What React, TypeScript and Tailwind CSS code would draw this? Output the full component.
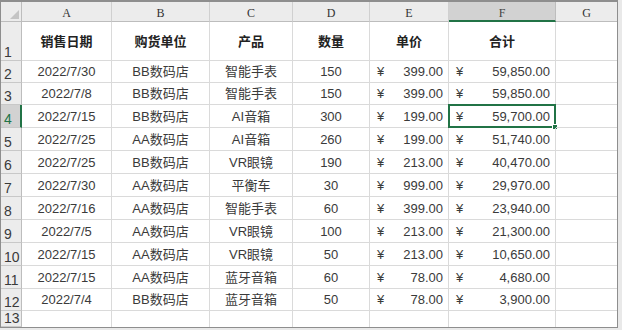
import React from "react"

const cols = ["A", "B", "C", "D", "E", "F", "G"]

const rows = [
  ["2022/7/30", "BB数码店", "智能手表", "150", "399.00", "59,850.00"],
  ["2022/7/8", "BB数码店", "智能手表", "150", "399.00", "59,850.00"],
  ["2022/7/15", "BB数码店", "AI音箱", "300", "199.00", "59,700.00"],
  ["2022/7/25", "AA数码店", "AI音箱", "260", "199.00", "51,740.00"],
  ["2022/7/25", "BB数码店", "VR眼镜", "190", "213.00", "40,470.00"],
  ["2022/7/30", "AA数码店", "平衡车", "30", "999.00", "29,970.00"],
  ["2022/7/16", "AA数码店", "智能手表", "60", "399.00", "23,940.00"],
  ["2022/7/5", "AA数码店", "VR眼镜", "100", "213.00", "21,300.00"],
  ["2022/7/15", "AA数码店", "VR眼镜", "50", "213.00", "10,650.00"],
  ["2022/7/15", "AA数码店", "蓝牙音箱", "60", "78.00", "4,680.00"],
  ["2022/7/4", "BB数码店", "蓝牙音箱", "50", "78.00", "3,900.00"],
]

const headers = ["销售日期", "购货单位", "产品", "数量", "单价", "合计"]

const font = "font-['Liberation_Sans','Noto_Sans_CJK_SC',sans-serif]"

function RowHead({ n, selected }: { n: number; selected?: boolean }) {
  return (
    <div
      className={`flex items-end pl-[3px] pb-[1px] text-[14px] leading-none border-b border-[#c8c8c8] ${
        selected
          ? "bg-[#d2d2d2] border-r-2 border-r-[#217346] text-[#217346]"
          : "bg-[#ececec] border-r border-r-[#bdbdbd] text-[#3a3a3a]"
      }`}
    >
      {n}
    </div>
  )
}

function Cell({ children, last, bottom }: { children?: React.ReactNode; last?: boolean; bottom?: boolean }) {
  return (
    <div
      className={`relative flex items-end justify-center pb-[2px] text-[13px] leading-[17px] text-[#3a3a3a] border-[#dadada] ${
        last ? "" : "border-r"
      } ${bottom ? "" : "border-b"}`}
    >
      {children}
    </div>
  )
}

function Money({ value }: { value: string }) {
  return (
    <div className="flex w-full items-end justify-between pl-[7px] pr-[5px]">
      <span>¥</span>
      <span>{value}</span>
    </div>
  )
}

export default function App() {
  return (
    <div className={`w-[622px] h-[330px] bg-[#e9e9e9] pr-[4px] pb-[2px] ${font}`}>
      <div className="border-t-2 border-l border-r border-b border-[#8e8e8e] bg-white">
        <div className="grid grid-cols-[21px_90px_98px_83px_77px_79px_107px_61px] grid-rows-[20px_39px_22px_22px_23px_23px_23px_23px_23px_23px_23px_23px_22px_16px]">
          {/* corner */}
          <div className="relative bg-[#ececec] border-r border-b border-[#bdbdbd]">
            <svg className="absolute right-[2px] bottom-[2px]" width="9" height="9" viewBox="0 0 9 9">
              <polygon points="9,0 9,9 0,9" fill="#c4c4c4" />
            </svg>
          </div>
          {cols.map(c => (
            <div
              key={c}
              className={`flex items-center justify-center pt-[3px] font-['Liberation_Serif',serif] text-[12px] leading-none ${
                c === "F"
                  ? "bg-[#d2d2d2] border-b-2 border-b-[#217346] text-[#444] border-r border-r-[#bdbdbd]"
                  : `bg-[#ececec] border-b border-b-[#bdbdbd] text-[#333] ${c === "G" ? "" : "border-r border-r-[#d0d0d0]"}`
              }`}
            >
              {c}
            </div>
          ))}

          {/* header row */}
          <RowHead n={1} />
          {headers.map(h => (
            <div
              key={h}
              className="flex items-center justify-center text-[13px] font-bold text-[#222] border-r border-b border-[#dadada] pt-[2px]"
            >
              {h}
            </div>
          ))}
          <Cell last />

          {rows.map((r, i) => (
            <React.Fragment key={i}>
              <RowHead n={i + 2} selected={i === 2} />
              <Cell>{r[0]}</Cell>
              <Cell>{r[1]}</Cell>
              <Cell>{r[2]}</Cell>
              <Cell>{r[3]}</Cell>
              <Cell>
                <Money value={r[4]} />
              </Cell>
              <Cell>
                <Money value={r[5]} />
                {i === 2 && (
                  <div className="absolute -left-[1px] -top-[1px] -right-[1px] -bottom-[1px] border-2 border-[#217346]">
                    <div className="absolute -right-[4px] -bottom-[4px] w-[6px] h-[6px] bg-[#217346] border border-white" />
                  </div>
                )}
              </Cell>
              <Cell last />
            </React.Fragment>
          ))}

          <RowHead n={13} />
          {cols.map(c => (
            <Cell key={c} last={c === "G"} bottom />
          ))}
        </div>
      </div>
    </div>
  )
}
